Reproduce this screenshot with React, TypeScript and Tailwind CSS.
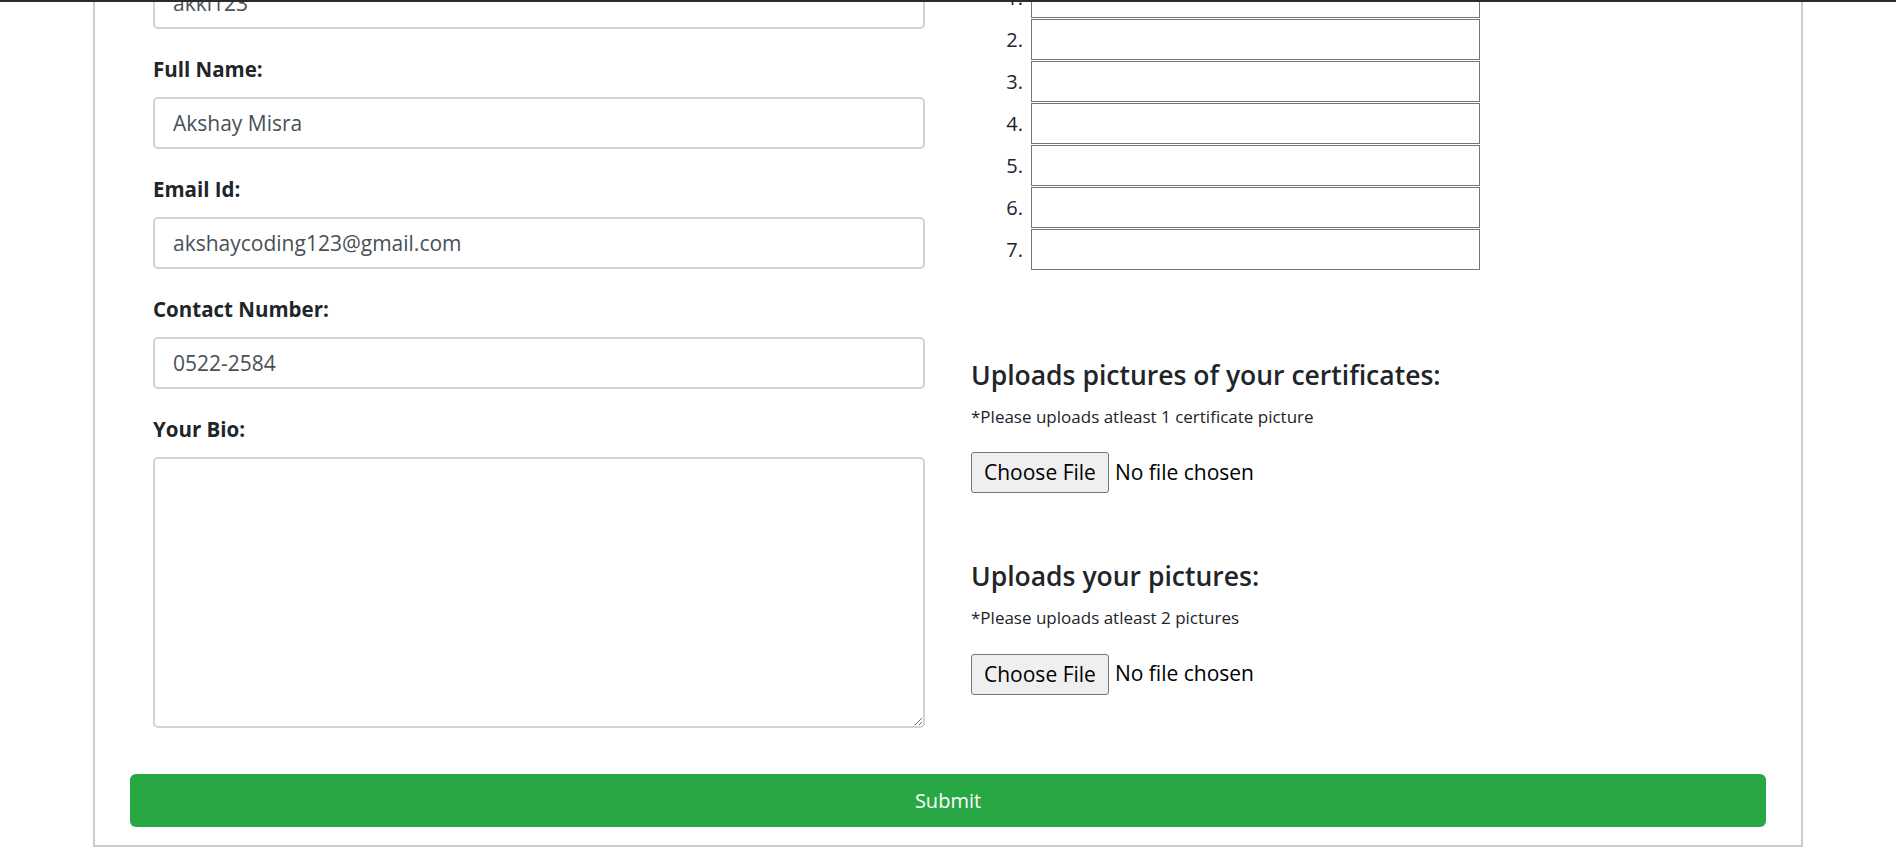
import { useState } from 'react';

const fields = [
  { label: 'Full Name:', value: 'Akshay Misra' },
  { label: 'Email Id:', value: 'akshaycoding123@gmail.com' },
  { label: 'Contact Number:', value: '0522-2584' },
];

function FileRow() {
  return (
    <div className="flex items-center gap-[6px]">
      <button className="h-[41px] px-[12px] bg-[#efefef] border border-[#767676] rounded-[3px] text-[21px] text-black leading-none">
        Choose File
      </button>
      <span className="text-[21px] text-black">No file chosen</span>
    </div>
  );
}

export default function App() {
  const [bio, setBio] = useState('');

  return (
    <div className="h-[862px] overflow-hidden bg-white font-['Open_Sans',sans-serif] text-[#212529]">
      <div className="h-[2px] bg-[#2b2b2b] relative z-10" />
      <div className="mx-auto w-[1710px] border-x-2 border-b-2 border-[#cccccc] px-[35px] pb-[18px]">
        <div className="flex -mt-[25px]">
          {/* left column */}
          <div className="w-1/2 px-[23px]">
            <input
              defaultValue="akki123"
              className="block w-full h-[52px] px-[18px] border-2 border-[#ced4da] rounded-[5px] text-[21px] text-[#495057]"
            />
            {fields.map(f => (
              <div key={f.label}>
                <label className="block mt-[25px] mb-[13px] text-[20.5px] leading-[30px] font-bold">{f.label}</label>
                <input
                  defaultValue={f.value}
                  className="block w-full h-[52px] px-[18px] border-2 border-[#ced4da] rounded-[5px] text-[21px] text-[#495057]"
                />
              </div>
            ))}
            <label className="block mt-[25px] mb-[13px] text-[20.5px] leading-[30px] font-bold">Your Bio:</label>
            <textarea
              value={bio}
              onChange={e => setBio(e.target.value)}
              className="block w-full h-[271px] px-[18px] py-[10px] border-2 border-[#ced4da] rounded-[5px] text-[21px] text-[#495057]"
            />
          </div>

          {/* right column */}
          <div className="w-1/2 px-[23px]">
            <div className="flex flex-col gap-[1px]">
              {[1, 2, 3, 4, 5, 6, 7].map(n => (
                <div key={n} className="flex items-center gap-[8px]">
                  <span className="w-[52px] text-right text-[20px]">{n}.</span>
                  <input className="h-[41px] w-[449px] border border-[#767676] px-[3px] text-[20px]" />
                </div>
              ))}
            </div>

            <h4 className="mt-[90px] text-[26.5px] leading-[1.2] font-semibold">Uploads pictures of your certificates:</h4>
            <p className="mt-[12px] text-[17px] leading-[1.5]">*Please uploads atleast 1 certificate picture</p>
            <div className="mt-[23px]">
              <FileRow />
            </div>

            <h4 className="mt-[68px] text-[26.5px] leading-[1.2] font-semibold">Uploads your pictures:</h4>
            <p className="mt-[12px] text-[17px] leading-[1.5]">*Please uploads atleast 2 pictures</p>
            <div className="mt-[23px]">
              <FileRow />
            </div>
          </div>
        </div>

        <button className="block w-full mt-[46px] h-[53px] rounded-[6px] bg-[#28a745] text-white text-[20px]">
          Submit
        </button>
      </div>
    </div>
  );
}
